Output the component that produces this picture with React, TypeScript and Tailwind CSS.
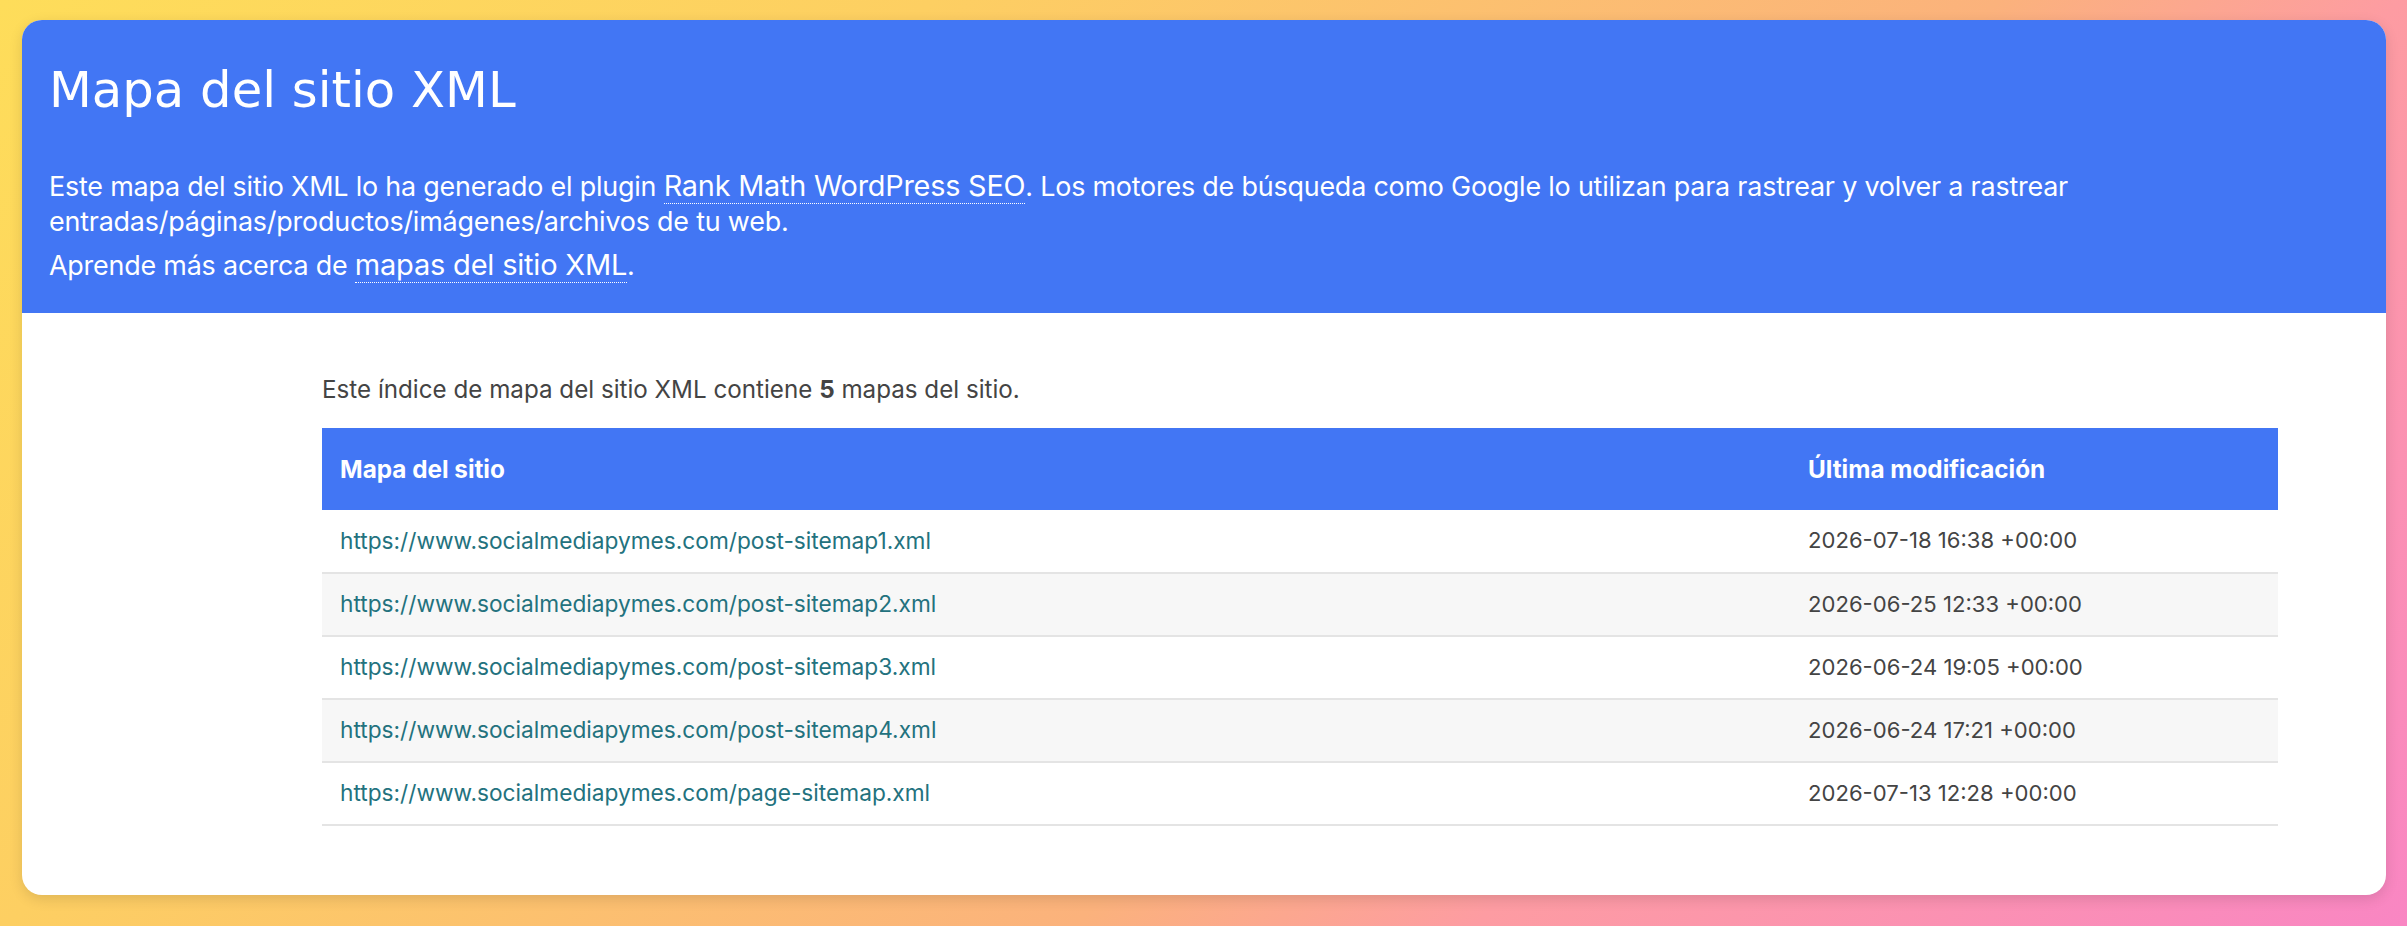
const rows = [
  { url: 'https://www.socialmediapymes.com/post-sitemap1.xml', mod: '2026-07-18 16:38 +00:00' },
  { url: 'https://www.socialmediapymes.com/post-sitemap2.xml', mod: '2026-06-25 12:33 +00:00' },
  { url: 'https://www.socialmediapymes.com/post-sitemap3.xml', mod: '2026-06-24 19:05 +00:00' },
  { url: 'https://www.socialmediapymes.com/post-sitemap4.xml', mod: '2026-06-24 17:21 +00:00' },
  { url: 'https://www.socialmediapymes.com/page-sitemap.xml', mod: '2026-07-13 12:28 +00:00' },
]

export default function App() {
  return (
    <div className="flex h-[926px] w-full bg-[linear-gradient(135deg,#fedd5a_0%,#fdcf62_28%,#fbb27c_60%,#fd9ca2_72%,#f986c3_100%)] pb-[31px] pl-[22px] pr-[21px] pt-[20px] font-['Inter',sans-serif]">
      <div className="flex flex-1 flex-col overflow-hidden rounded-[20px] bg-white shadow-[0_4px_14px_rgba(0,0,0,0.12)]">
        {/* Blue description header */}
        <div className="h-[293px] bg-[#4276f4] px-[27px] pt-[46px] text-white">
          <h1 className="font-['DejaVu_Sans',sans-serif] text-[49.7px] leading-[1]">Mapa del sitio XML</h1>
          <p className="mt-[52px] text-[26.9px] leading-[35px] tracking-[-0.2px]">
            Este mapa del sitio XML lo ha generado el plugin{' '}
            <a className="border-b border-dotted border-white text-[28.8px]">Rank Math WordPress SEO</a>. Los motores de
            búsqueda como Google lo utilizan para rastrear y volver a rastrear entradas/páginas/productos/imágenes/archivos
            de tu web.
          </p>
          <p className="mt-[8px] text-[26.9px] leading-[35px] tracking-[-0.2px]">
            Aprende más acerca de{' '}
            <a className="border-b border-dotted border-white text-[29px]">mapas del sitio XML</a>.
          </p>
        </div>

        {/* Sitemap index table */}
        <div className="ml-[300px] mr-[108px] mt-[62px]">
          <p className="text-[24.2px] leading-[30px] text-[#444]">
            Este índice de mapa del sitio XML contiene <strong>5</strong> mapas del sitio.
          </p>
          <table className="mt-[23px] w-full border-collapse">
            <thead>
              <tr className="h-[82px] bg-[#4276f4] text-left text-[24.3px] text-white">
                <th className="w-[1468px] pl-[18px] font-bold">Mapa del sitio</th>
                <th className="pl-[18px] font-bold">Última modificación</th>
              </tr>
            </thead>
            <tbody>
              {rows.map((r, i) => (
                <tr
                  key={r.url}
                  className={`h-[63px] border-b-2 border-[#e4e4e4] ${i % 2 === 1 ? 'bg-[#f7f7f7]' : 'bg-white'}`}
                >
                  <td className="pl-[18px] text-[22.7px] text-[#23727e]">{r.url}</td>
                  <td className="pl-[18px] text-[22.1px] text-[#444]">{r.mod}</td>
                </tr>
              ))}
            </tbody>
          </table>
        </div>
      </div>
    </div>
  )
}
